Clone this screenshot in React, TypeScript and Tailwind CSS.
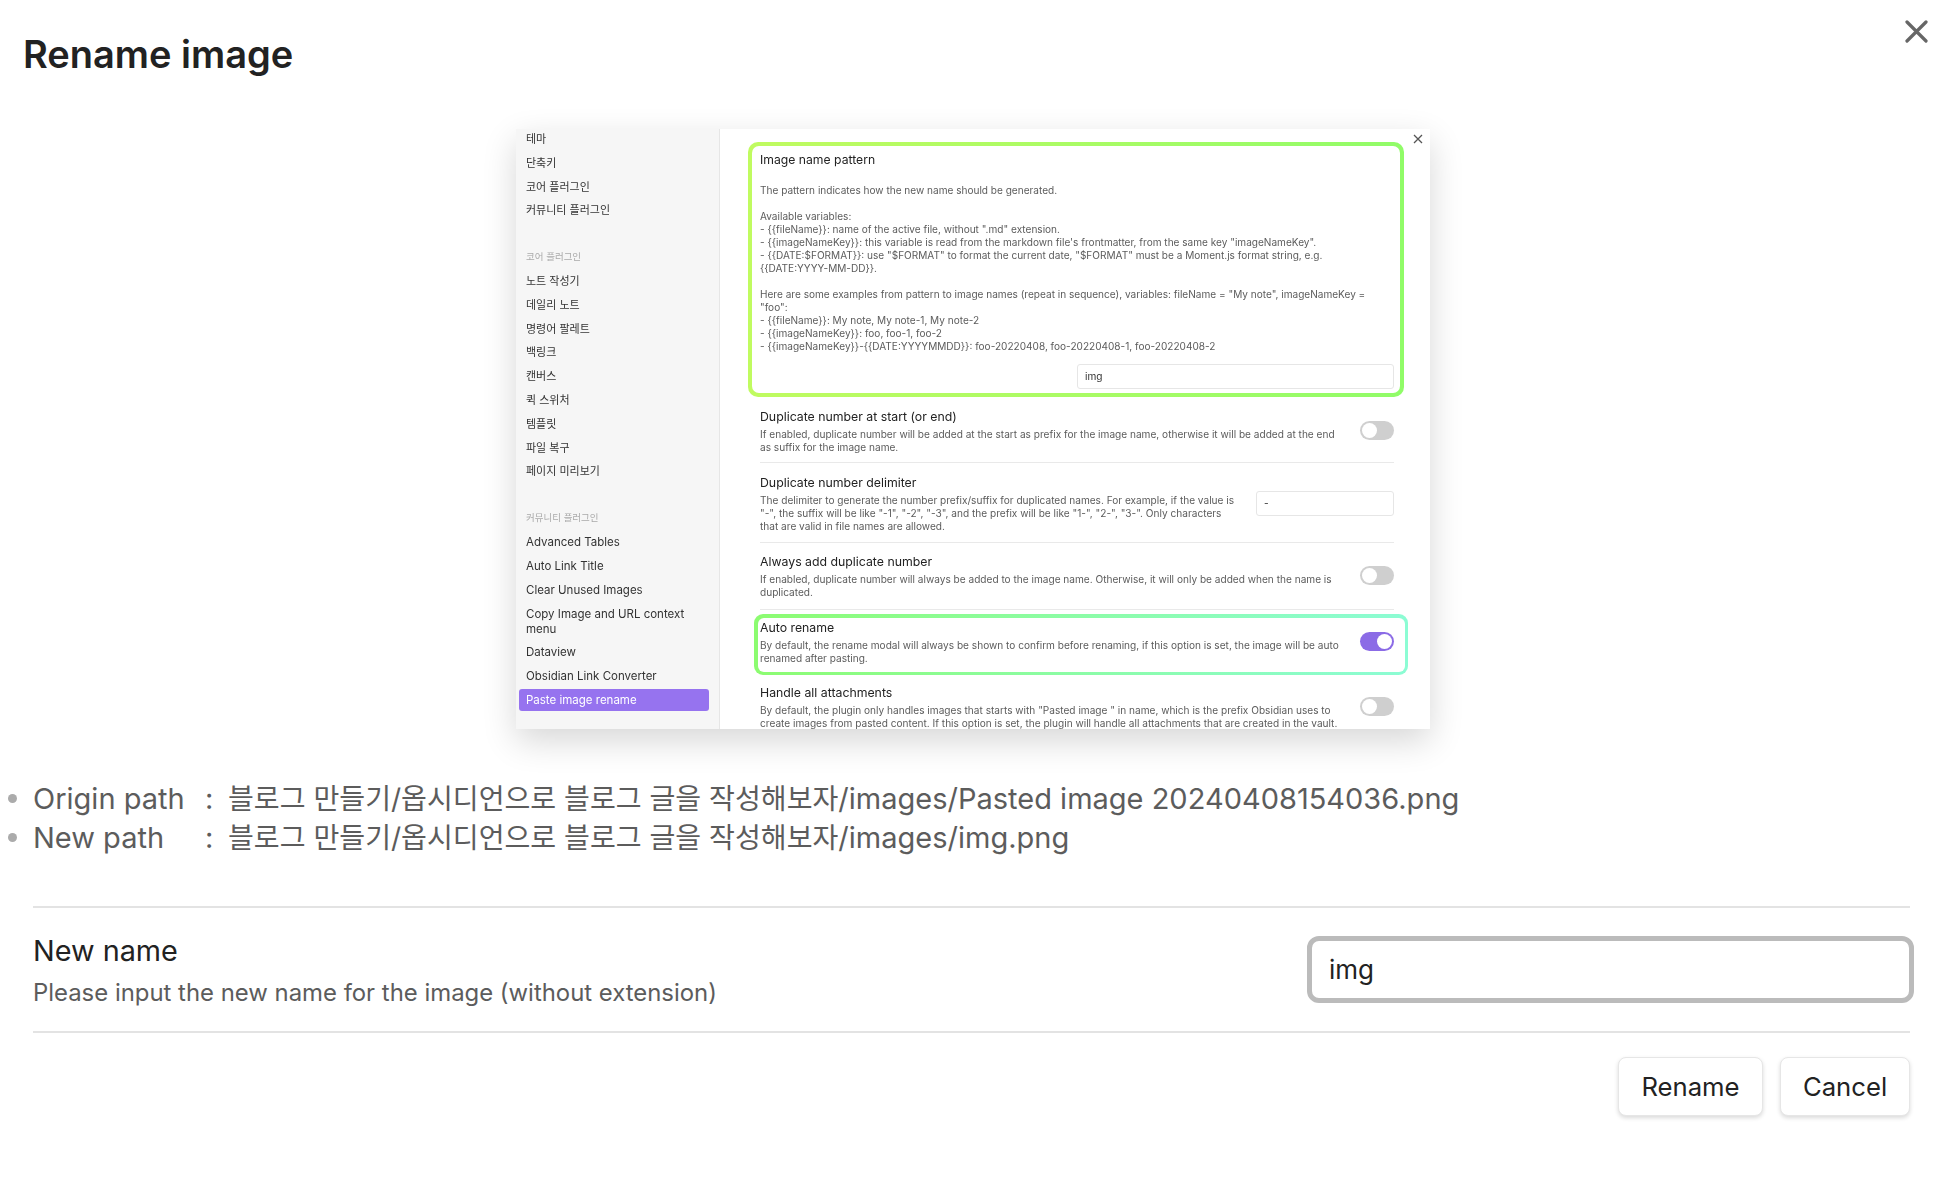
const coreItems = ['노트 작성기', '데일리 노트', '명령어 팔레트', '백링크', '캔버스', '퀵 스위처', '템플릿', '파일 복구', '페이지 미리보기'];
const communityItems = ['Advanced Tables', 'Auto Link Title', 'Clear Unused Images'];
const folder = '블로그 만들기/옵시디언으로 블로그 글을 작성해보자';
const patternText = `The pattern indicates how the new name should be generated.

Available variables:
- {{fileName}}: name of the active file, without ".md" extension.
- {{imageNameKey}}: this variable is read from the markdown file's frontmatter, from the same key "imageNameKey".
- {{DATE:$FORMAT}}: use "$FORMAT" to format the current date, "$FORMAT" must be a Moment.js format string, e.g.
{{DATE:YYYY-MM-DD}}.

Here are some examples from pattern to image names (repeat in sequence), variables: fileName = "My note", imageNameKey =
"foo":
- {{fileName}}: My note, My note-1, My note-2
- {{imageNameKey}}: foo, foo-1, foo-2
- {{imageNameKey}}-{{DATE:YYYYMMDD}}: foo-20220408, foo-20220408-1, foo-20220408-2`;

function NavItem({ label }: { label: string }) {
  return <div className="h-[23.8px] px-[10px] leading-[23.8px] whitespace-nowrap text-[#333]">{label}</div>;
}

function NavHeader({ label }: { label: string }) {
  return <div className="mt-[23px] h-[23.8px] px-[10px] text-[9.5px] leading-[22px] text-[#aaa]">{label}</div>;
}

function Toggle({ on = false }: { on?: boolean }) {
  return (
    <div className={`mb-[1.5px] flex h-[19px] w-[34px] shrink-0 items-center rounded-full px-[2px] ${on ? 'justify-end bg-[#8b6be6]' : 'justify-start bg-[#cfcfcf]'}`}>
      <div className="h-[15px] w-[15px] rounded-full bg-white" />
    </div>
  );
}

function RowText({ title, desc }: { title: string; desc: string }) {
  return (
    <div className="min-w-0">
      <div className="text-[12.3px] leading-[15px] whitespace-nowrap text-[#222]">{title}</div>
      <div className="mt-[4px] text-[10.1px] leading-[13px] whitespace-pre-line text-[#5c5c5c]">{desc}</div>
    </div>
  );
}

function ScreenshotCard() {
  return (
    <div className="relative flex h-[600px] w-[914px] overflow-hidden bg-white font-['Inter','Noto_Sans_CJK_KR',sans-serif] shadow-[0_12px_32px_rgba(0,0,0,0.16)] blur-[0.3px]">
      <div className="w-[204px] shrink-0 border-r border-[#e6e6e6] bg-[#f6f6f6] text-[11.5px]">
        <div className="-mt-[1px]">
          <div className="text-[11px]">
            <NavItem label="테마" />
            <NavItem label="단축키" />
            <NavItem label="코어 플러그인" />
            <NavItem label="커뮤니티 플러그인" />
            <NavHeader label="코어 플러그인" />
            {coreItems.map((item) => (
              <NavItem key={item} label={item} />
            ))}
            <NavHeader label="커뮤니티 플러그인" />
          </div>
          {communityItems.map((item) => (
            <NavItem key={item} label={item} />
          ))}
          <div className="px-[10px] py-[4.4px] leading-[15px] text-[#333]">
            Copy Image and URL context
            <br />
            menu
          </div>
          <NavItem label="Dataview" />
          <NavItem label="Obsidian Link Converter" />
          <div className="mr-[10px] ml-[3px] h-[22px] rounded-[3px] bg-[#9673ef] px-[7px] leading-[22px] text-white">Paste image rename</div>
        </div>
      </div>

      <div className="min-w-0 flex-1 pt-[13px] pr-[36px] pl-[40px]">
        <div className="-mr-[10px] -ml-[12px] rounded-[10px] bg-gradient-to-r from-[#c0fb60] to-[#90fc68] p-[4px]">
          <div className="h-[247px] rounded-[7px] bg-white pt-[5.5px] pr-[6px] pl-[8px]">
            <div className="text-[12.2px] leading-[15px] text-[#222]">Image name pattern</div>
            <div className="mt-[17px] text-[10.07px] leading-[13px] whitespace-pre-line text-[#5c5c5c]">{patternText}</div>
            <div className="mt-[11px] ml-[317px] h-[25px] w-[317px] rounded-[3px] border border-[#e6e6e6] px-[7px] text-[10.1px] leading-[23px] text-[#333]">img</div>
          </div>
        </div>

        <div className="flex items-center justify-between border-b border-[#e9e9e9] pt-[11.5px] pb-[8.5px]">
          <RowText title="Duplicate number at start (or end)" desc={'If enabled, duplicate number will be added at the start as prefix for the image name, otherwise it will be added at the end\nas suffix for the image name.'} />
          <Toggle />
        </div>
        <div className="flex items-center justify-between border-b border-[#e9e9e9] pt-[11.5px] pb-[9.5px]">
          <RowText title="Duplicate number delimiter" desc={'The delimiter to generate the number prefix/suffix for duplicated names. For example, if the value is\n"-", the suffix will be like "-1", "-2", "-3", and the prefix will be like "1-", "2-", "3-". Only characters\nthat are valid in file names are allowed.'} />
          <div className="h-[25px] w-[138px] shrink-0 rounded-[3px] border border-[#e6e6e6] px-[7px] text-[10.1px] leading-[23px] text-[#333]">-</div>
        </div>
        <div className="flex items-center justify-between border-b border-[#e9e9e9] pt-[11px] pb-[9.5px]">
          <RowText title="Always add duplicate number" desc={'If enabled, duplicate number will always be added to the image name. Otherwise, it will only be added when the name is\nduplicated.'} />
          <Toggle />
        </div>
        <div className="mt-[4.5px] -mr-[14px] -ml-[6px] rounded-[9px] bg-gradient-to-r from-[#8cfc70] to-[#8cfcd4] p-[3.5px]">
          <div className="flex h-[54px] items-center justify-between rounded-[6px] bg-white pr-[10.5px] pb-[5px] pl-[2.5px]">
            <RowText title="Auto rename" desc={'By default, the rename modal will always be shown to confirm before renaming, if this option is set, the image will be auto\nrenamed after pasting.'} />
            <Toggle on />
          </div>
        </div>
        <div className="mt-[9.5px] flex items-center justify-between">
          <RowText title="Handle all attachments" desc={'By default, the plugin only handles images that starts with "Pasted image " in name, which is the prefix Obsidian uses to\ncreate images from pasted content. If this option is set, the plugin will handle all attachments that are created in the vault.'} />
          <Toggle />
        </div>
      </div>

      <svg className="absolute top-[5px] right-[7px] h-[10px] w-[10px] text-[#555]" viewBox="0 0 10 10" fill="none" stroke="currentColor" strokeWidth="1.3">
        <path d="M1 1l8 8M9 1l-8 8" />
      </svg>
    </div>
  );
}

function PathLine({ label, file }: { label: string; file: string }) {
  return (
    <li className="flex h-[39px] items-center whitespace-nowrap">
      <span className="mr-[16px] h-[9px] w-[9px] shrink-0 rounded-full bg-[#ababab]" />
      <span className="w-[172px] shrink-0">{label}</span>
      <span className="w-[23px] shrink-0">:</span>
      <span>
        <span className="text-[28.1px]">{folder}</span>/images/{file}
      </span>
    </li>
  );
}

export default function App() {
  return (
    <div className="relative h-[1178px] overflow-hidden bg-white font-['Inter','Noto_Sans_CJK_KR',sans-serif]">
      <h1 className="pt-[30px] pl-[23px] text-[38px] leading-[48px] font-semibold text-[#222]">Rename image</h1>
      <svg className="absolute top-[20px] left-[1905px] h-[23px] w-[23px] text-[#666]" viewBox="0 0 23 23" fill="none" stroke="currentColor" strokeWidth="3.2" strokeLinecap="round">
        <path d="M2 2l19 19M21 2L2 21" />
      </svg>

      <div className="mt-[51px] flex justify-center pl-[6px]">
        <ScreenshotCard />
      </div>

      <ul className="mt-[50px] pl-[8px] text-[29px] leading-[39px] text-[#5c5c5c]">
        <PathLine label="Origin path" file="Pasted image 20240408154036.png" />
        <PathLine label="New path" file="img.png" />
      </ul>

      <div className="mt-[49px] mr-[30px] ml-[33px]">
        <div className="flex h-[127px] items-center justify-between border-y-2 border-[#e3e3e3]">
          <div className="pt-[2px]">
            <div className="text-[28.8px] leading-[38px] text-[#222]">New name</div>
            <div className="mt-[7px] text-[23.9px] leading-[32px] text-[#5c5c5c]">Please input the new name for the image (without extension)</div>
          </div>
          <div className="-mr-[4px] flex h-[67px] w-[607px] items-center rounded-[12px] border-[5px] border-[#bbb] px-[17px] text-[26px] text-[#222]">img</div>
        </div>
        <div className="mt-[24px] flex justify-end gap-[17px]">
          <button className="h-[59px] w-[145px] rounded-[8px] border border-[#e6e6e6] bg-white pt-[1px] text-[25.7px] text-[#222] shadow-[0_2px_4px_rgba(0,0,0,0.15)]">Rename</button>
          <button className="h-[59px] w-[130px] rounded-[8px] border border-[#e6e6e6] bg-white pt-[1px] text-[25.7px] text-[#222] shadow-[0_2px_4px_rgba(0,0,0,0.15)]">Cancel</button>
        </div>
      </div>
    </div>
  );
}
